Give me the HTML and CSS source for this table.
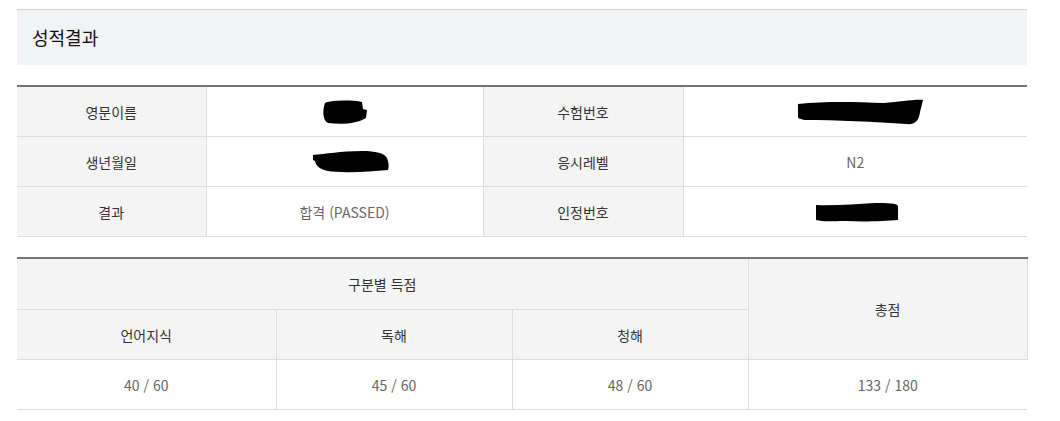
FILE: index.html
```html
<!DOCTYPE html>
<html lang="ko">
<head>
<meta charset="utf-8">
<title>성적결과</title>
<link rel="stylesheet" href="styles.css">
</head>
<body>
<div class="wrap">
  <div class="title-bar"><h2 class="title">성적결과</h2></div>

  <table class="info">
    <colgroup><col class="c1"><col class="c2"><col class="c3"><col class="c4"></colgroup>
    <tbody>
      <tr>
        <th>영문이름</th>
        <td><svg class="blob" width="46" height="26" viewBox="0 0 46 26"><path d="M3 4 C10 1 30 1 40 3 L41 10 L45 11 L44 19 C36 24 22 26 6 24 C1 22 0 12 3 4 Z" fill="#000"/></svg></td>
        <th>수험번호</th>
        <td class="shift5"><svg class="blob" width="128" height="28" viewBox="0 0 128 28"><path d="M2 6 C30 3 60 4 88 5 C105 4 118 1 127 2 L124 14 C123 22 120 27 110 26 C80 24 40 22 8 22 L2 20 Z" fill="#000"/></svg></td>
      </tr>
      <tr>
        <th>생년월일</th>
        <td class="shift6"><svg class="blob" width="78" height="22" viewBox="0 0 78 22"><path d="M1 4 C14 3 28 0 50 0 C64 0 72 2 75 7 C77 12 77 16 76 19 C60 20 44 22 30 21 C14 21 4 18 3 10 L1 9 Z" fill="#000"/></svg></td>
        <th>응시레벨</th>
        <td>N2</td>
      </tr>
      <tr>
        <th>결과</th>
        <td>합격 (PASSED)</td>
        <th>인정번호</th>
        <td class="shift2"><svg class="blob" width="84" height="19" viewBox="0 0 84 19"><path d="M1 2 C20 3 40 1 60 0 C72 0 82 0 83 3 L83 17 C70 18 50 19 30 18 C18 18 8 19 1 17 Z" fill="#000"/></svg></td>
      </tr>
    </tbody>
  </table>

  <table class="score">
    <colgroup><col class="s1"><col class="s2"><col class="s3"><col class="s4"></colgroup>
    <thead>
      <tr>
        <th colspan="3" class="r1">구분별 득점</th>
        <th rowspan="2" class="total">총점</th>
      </tr>
      <tr>
        <th>언어지식</th>
        <th>독해</th>
        <th>청해</th>
      </tr>
    </thead>
    <tbody>
      <tr>
        <td>40 / 60</td>
        <td>45 / 60</td>
        <td>48 / 60</td>
        <td>133 / 180</td>
      </tr>
    </tbody>
  </table>
</div>
</body>
</html>
```

FILE: styles.css
```css
html, body {
  margin: 0;
  padding: 0;
  background: #fff;
}
body {
  font-family: "Noto Sans CJK KR", "Noto Sans", sans-serif;
  color: #333;
}
.wrap {
  width: 1010px;
  margin: 9px 0 0 17px;
}
.title-bar {
  border-top: 1px solid #cfd1d6;
  background: #f2f3f7;
  height: 55px;
  display: flex;
  align-items: center;
  padding-left: 15px;
}
.title {
  margin: 0 0 2px;
  font-size: 18px;
  font-weight: 400;
  color: #111;
}
table {
  width: 1010px;
  border-collapse: collapse;
  table-layout: fixed;
  border-top: 2px solid #757575;
  margin-top: 20px;
  font-size: 14px;
}
th, td {
  height: 49px;
  padding: 0;
  text-align: center;
  vertical-align: middle;
  border-bottom: 1px solid #dcdcdc;
  border-left: 1px solid #dcdcdc;
  font-weight: 400;
  line-height: 20px;
}
tr > :first-child { border-left: none; }
th {
  background: #f4f4f4;
  color: #333;
}
td {
  background: #fff;
  color: #666;
}
.info .c1 { width: 189px; }
.info .c2 { width: 277px; }
.info .c3 { width: 200px; }
.info .c4 { width: 344px; }
.score .s1 { width: 259px; }
.score .s2 { width: 236px; }
.score .s3 { width: 236px; }
.score .s4 { width: 279px; }
.score .r1 { border-left: none; height: 50px; }
.score .total { border-left: 1px solid #dcdcdc; border-right: 1px solid #dcdcdc; }
.score tbody tr > :first-child { border-left: none; }
.score thead tr:nth-child(2) > :first-child { border-left: none; }
.blob { display: inline-block; vertical-align: middle; }
.shift5 { padding-left: 10px; }
.shift6 { padding-left: 12px; }
.shift2 { padding-left: 4px; }
```
